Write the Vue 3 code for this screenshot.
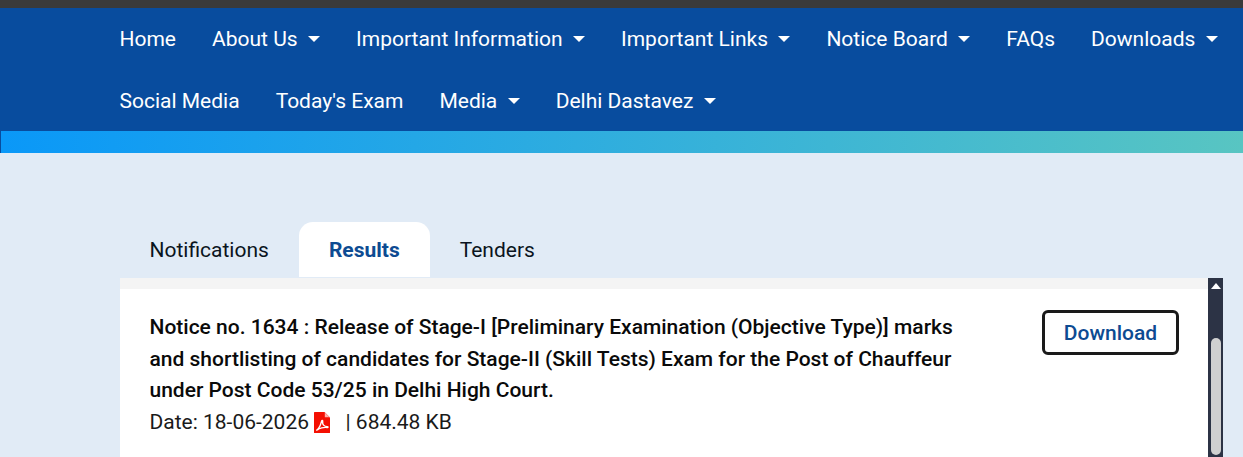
<script setup>
const row1 = [
  { t: 'Home' }, { t: 'About Us', c: true }, { t: 'Important Information', c: true },
  { t: 'Important Links', c: true }, { t: 'Notice Board', c: true }, { t: 'FAQs' }, { t: 'Downloads', c: true },
  { t: 'Social Media' }, { t: "Today's Exam" }, { t: 'Media', c: true }, { t: 'Delhi Dastavez', c: true }
]
const tabs = ['Notifications', 'Results', 'Tenders']
</script>

<template>
  <div class="page">
    <div class="topbar"></div>
    <nav class="nav">
      <a v-for="item in row1" :key="item.t" class="nav-link" :class="{ caret: item.c }">{{ item.t }}</a>
    </nav>
    <div class="gradient"></div>
    <main class="main">
      <div class="tabs">
        <div v-for="t in tabs" :key="t" class="tab" :class="{ active: t === 'Results' }">{{ t }}</div>
      </div>
      <div class="panel-wrap">
        <div class="panel">
          <div class="strip"></div>
          <div class="notice">
            <div class="notice-text">
              <p class="title">Notice no. 1634 : Release of Stage-I [Preliminary Examination (Objective Type)] marks and shortlisting of candidates for Stage-II (Skill Tests) Exam for the Post of Chauffeur under Post Code 53/25 in Delhi High Court.</p>
              <p class="meta">
                <span>Date: 18-06-2026</span>
                <svg class="pdf" viewBox="0 0 16 21" width="16" height="21">
                  <path d="M0 0.6 Q0 0 0.6 0 H10.5 L16 5.5 V20.4 Q16 21 15.4 21 H0.6 Q0 21 0 20.4 Z" fill="#f40f02"/>
                  <path d="M10.8 0.4 V5.2 H15.6 Z" fill="#ffb3ad"/>
                  <path d="M2.8 18 C4.5 17 6.4 14 7.6 9.2 C7.9 8 9 8.2 8.7 9.8 C8.2 12.3 10 14.5 13.3 14.6 C14.3 14.7 14.2 15.6 13.2 15.5 C10 15.2 6.8 15.8 4.6 17 C3.4 18 2.4 18.3 2.8 18 Z" fill="none" stroke="#fff" stroke-width="1.4"/>
                </svg>
                <span class="size">| 684.48 KB</span>
              </p>
            </div>
            <button class="download">Download</button>
          </div>
        </div>
        <div class="scrollbar">
          <svg class="arrow" viewBox="0 0 10 6" width="10" height="6"><path d="M0 6 L5 0 L10 6 Z" fill="#fff"/></svg>
          <div class="thumb"></div>
        </div>
      </div>
    </main>
  </div>
</template>

<style>
html, body { margin: 0; overflow: hidden; }
</style>

<style scoped>
.page {
  width: 1243px;
  height: 457px;
  overflow: hidden;
  background: #e1ebf6;
  font-family: Roboto, "Liberation Sans", sans-serif;
  display: flex;
  flex-direction: column;
}
.topbar { height: 8px; background: #3a3a3a; flex: none; }
.nav {
  flex: none;
  height: 123px;
  box-sizing: border-box;
  background: #084c9e;
  padding: 0 0 0 101.5px;
  display: flex;
  flex-wrap: wrap;
  align-content: flex-start;
}
.nav-link {
  height: 62px;
  line-height: 61px;
  padding: 0 18px;
  color: #fff;
  font-size: 21px;
  white-space: nowrap;
  display: flex;
  align-items: center;
}
.nav-link.caret::after {
  content: "";
  margin-left: 10.4px;
  border-top: 6px solid #fff;
  border-left: 6px solid transparent;
  border-right: 6px solid transparent;
}
.gradient {
  flex: none;
  height: 22px;
  background: linear-gradient(90deg, #0a98f8, #58c5c2);
  border-left: 1px solid #084c9e;
  box-sizing: border-box;
}
.main { flex: 1; padding: 69px 20px 0 120px; display: flex; flex-direction: column; }
.tabs { display: flex; height: 56px; flex: none; }
.tab {
  height: 55px;
  line-height: 57px;
  padding: 0 30.5px 0 29.5px;
  font-size: 21px;
  color: #0a1420;
  border-radius: 14px 14px 0 0;
}
.tab.active { background: #fff; color: #0d4b92; font-weight: 700; }
.panel-wrap { flex: 1; display: flex; }
.panel { width: 1088px; background: #fff; }
.strip { height: 11px; background: #f4f4f4; }
.notice { display: flex; justify-content: space-between; align-items: flex-start; padding: 23px 29px 0 29.5px; }
.notice-text { width: 812px; }
.title {
  margin: 0;
  font-size: 21px;
  font-weight: 500;
  line-height: 31.5px;
  color: #0a0a0a;
}
.meta {
  margin: 0;
  display: flex;
  align-items: center;
  height: 31px;
  font-size: 21px;
  color: #1a1a1a;
}
.pdf { margin-left: 5px; flex: none; }
.size { margin-left: 15.5px; }
.download {
  width: 137px;
  height: 45px;
  margin-top: -2px;
  box-sizing: border-box;
  background: #fff;
  border: 3px solid #1a1a1a;
  border-radius: 6px;
  color: #0d4b92;
  font-family: inherit;
  font-size: 21px;
  font-weight: 500;
  padding: 0;
}
.scrollbar {
  width: 15px;
  background: #2c3345;
  display: flex;
  flex-direction: column;
  align-items: center;
}
.arrow { margin-top: 5px; }
.thumb {
  width: 10px;
  height: 117px;
  margin-top: 49px;
  background: #d0d0d0;
  border-radius: 5px;
  flex: none;
}
</style>
